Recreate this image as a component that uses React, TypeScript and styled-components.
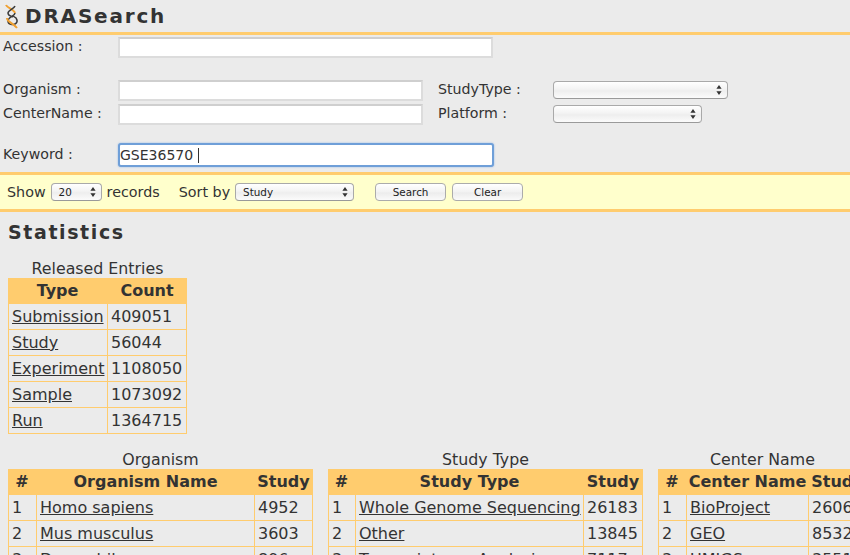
import styled, { createGlobalStyle } from 'styled-components';

const orange = '#ffcc6e';
const font = '"DejaVu Sans", Verdana, sans-serif';

const GlobalStyle = createGlobalStyle`
  html, body {
    margin: 0;
    padding: 0;
    height: 555px;
    overflow: hidden;
    background: #ebebeb;
  }
  body {
    font-family: ${font};
    color: #333;
  }
`;

const Page = styled.div`
  width: 850px;
  height: 555px;
  overflow: hidden;
`;

const Header = styled.header`
  height: 32px;
  display: flex;
  align-items: center;
  padding-left: 5px;
  border-bottom: 3px solid ${orange};
`;

const Brand = styled.h1`
  margin: 0 0 0 4px;
  font-size: 20px;
  font-weight: 700;
  letter-spacing: 1.8px;
  color: #333;
`;

const SearchForm = styled.form`
  height: 137px;
  padding-left: 3px;
  display: flex;
  flex-direction: column;
`;

const FormRow = styled.div<{ $top: number }>`
  display: flex;
  align-items: center;
  height: 24px;
  margin-top: ${(p) => p.$top}px;
`;

const Label = styled.label<{ $width: number }>`
  width: ${(p) => p.$width}px;
  flex: none;
  padding-bottom: 2px;
  font-size: 14.2px;
  white-space: pre;
`;

const TextBox = styled.input<{ $width: number }>`
  box-sizing: border-box;
  width: ${(p) => p.$width}px;
  height: 21px;
  margin: 0 15px 0 0;
  padding: 0 1px;
  background: #fff;
  border: 2px solid #dcdcdc;
  border-top-color: #cfcfcf;
  border-radius: 0;
  font: 14px ${font};
  color: #333;
  outline: none;
`;

const KeywordBox = styled.div`
  box-sizing: border-box;
  width: 376px;
  height: 24px;
  display: flex;
  align-items: center;
  background: #fff;
  border: 2px solid #6f9fd8;
  border-radius: 3px;
  box-shadow: 0 0 2px #8fb6e6;
  font-size: 14px;
`;

const Caret = styled.span`
  width: 1px;
  height: 15px;
  margin-left: 5px;
  background: #333;
`;

const SelectBox = styled.div<{ $width: number; $height: number }>`
  box-sizing: border-box;
  width: ${(p) => p.$width}px;
  height: ${(p) => p.$height}px;
  display: flex;
  align-items: center;
  padding: 0 5px 0 7px;
  background: linear-gradient(#ffffff, #f3f3f3 45%, #eeeeee 55%, #fbfbfb);
  border: 1px solid #a9a9a9;
  border-bottom-color: #9a9a9a;
  border-radius: 4px;
  font-size: 10.4px;
  color: #222;
`;

const SelectText = styled.span`
  flex: 1;
`;

const SelectArrows = styled.svg`
  width: 6px;
  height: 10px;
  flex: none;
  fill: #333;
`;

const Toolbar = styled.div`
  box-sizing: border-box;
  height: 40px;
  display: flex;
  align-items: center;
  padding-left: 7px;
  background: #ffffcc;
  border-top: 3px solid ${orange};
  border-bottom: 3px solid ${orange};
  font-size: 14.3px;
`;

const ToolText = styled.span<{ $left: number }>`
  margin-left: ${(p) => p.$left}px;
`;

const ToolSelect = styled(SelectBox)`
  margin-left: 5px;
`;

const ToolButton = styled.button<{ $left: number }>`
  box-sizing: border-box;
  width: 71px;
  height: 18px;
  margin-left: ${(p) => p.$left}px;
  padding: 0;
  background: linear-gradient(#ffffff, #f2f2f2 50%, #ececec 55%, #fafafa);
  border: 1px solid #ababab;
  border-radius: 4px;
  font: 10.4px ${font};
  color: #222;
`;

const Heading = styled.h2`
  margin: 9px 0 0 8px;
  font-size: 19px;
  line-height: 23px;
  font-weight: 700;
  letter-spacing: 1.6px;
  color: #333;
`;

const DataTable = styled.table<{ $width: number }>`
  width: ${(p) => p.$width}px;
  flex: none;
  table-layout: fixed;
  border-collapse: separate;
  border-spacing: 0;
  font-size: 16px;
  color: #333;

  caption {
    padding-top: 5px;
    line-height: 18px;
    font-size: 15.8px;
    text-align: center;
  }

  th {
    box-sizing: border-box;
    height: 25px;
    padding: 0 1px 0 0;
    background: ${orange};
    font-weight: 700;
    text-align: center;
    white-space: nowrap;
  }

  td {
    box-sizing: border-box;
    height: 26px;
    padding: 0 3px;
    border-right: 1px solid ${orange};
    border-bottom: 1px solid ${orange};
    white-space: nowrap;
  }

  td:first-child {
    border-left: 1px solid ${orange};
  }

  tbody tr:first-child td {
    height: 27px;
    border-top: 1px solid ${orange};
  }

  a {
    color: #333;
    text-decoration: underline;
  }
`;

const HeadCell = styled.th<{ $width: number }>`
  width: ${(p) => p.$width}px;
`;

const EntriesWrap = styled.div`
  margin: 11px 0 0 8px;
`;

const TablesRow = styled.div`
  display: flex;
  margin: 12px 0 0 8px;
  gap: 15px;
`;

const Logo = () => (
  <svg width="16" height="25" viewBox="0 0 16 25" fill="none">
    <path d="M1 1c1 3 8 4 9 8" stroke="#f0a030" strokeWidth="2" />
    <path d="M10 2C9 5 3 6 3 9s3 3 5 4" stroke="#3a3a3a" strokeWidth="1.5" />
    <path d="M10 9c0 3-7 4-7 8s5 4 7 3 3-3 1-6l-3-2" stroke="#3a3a3a" strokeWidth="1.5" />
    <path d="M2 14c0 4 6 5 10 10" stroke="#f0a030" strokeWidth="2" />
  </svg>
);

const Arrows = () => (
  <SelectArrows viewBox="0 0 6 10">
    <path d="M3 0l2.6 3.8H.4zM3 10L.4 6.2h5.2z" />
  </SelectArrows>
);

const entries = [
  ['Submission', '409051'],
  ['Study', '56044'],
  ['Experiment', '1108050'],
  ['Sample', '1073092'],
  ['Run', '1364715'],
];

const rankTables = [
  {
    caption: 'Organism',
    name: 'Organism Name',
    cols: [29, 218, 58],
    rows: [
      ['Homo sapiens', '4952'],
      ['Mus musculus', '3603'],
      ['Drosophila', '896'],
    ],
  },
  {
    caption: 'Study Type',
    name: 'Study Type',
    cols: [28, 228, 59],
    rows: [
      ['Whole Genome Sequencing', '26183'],
      ['Other', '13845'],
      ['Transcriptome Analysis', '7117'],
    ],
  },
  {
    caption: 'Center Name',
    name: 'Center Name',
    cols: [29, 122, 58],
    rows: [
      ['BioProject', '26066'],
      ['GEO', '8532'],
      ['UMIGS', '3551'],
    ],
  },
];

export default function App() {
  return (
    <Page>
      <GlobalStyle />
      <Header>
        <Logo />
        <Brand>DRASearch</Brand>
      </Header>
      <SearchForm>
        <FormRow $top={0}>
          <Label $width={115}>Accession :</Label>
          <TextBox $width={375} />
        </FormRow>
        <FormRow $top={19}>
          <Label $width={115}>Organism :</Label>
          <TextBox $width={305} />
          <Label $width={115}>StudyType :</Label>
          <SelectBox $width={175} $height={18}><SelectText /><Arrows /></SelectBox>
        </FormRow>
        <FormRow $top={0}>
          <Label $width={115}>CenterName :</Label>
          <TextBox $width={305} />
          <Label $width={115}>Platform :</Label>
          <SelectBox $width={149} $height={18}><SelectText /><Arrows /></SelectBox>
        </FormRow>
        <FormRow $top={17}>
          <Label $width={115}>Keyword :</Label>
          <KeywordBox>GSE36570<Caret /></KeywordBox>
        </FormRow>
      </SearchForm>
      <Toolbar>
        Show
        <ToolSelect $width={51} $height={18}><SelectText>20</SelectText><Arrows /></ToolSelect>
        <ToolText $left={5}>records</ToolText>
        <ToolText $left={19}>Sort by</ToolText>
        <ToolSelect $width={119} $height={18}><SelectText>Study</SelectText><Arrows /></ToolSelect>
        <ToolButton $left={21}>Search</ToolButton>
        <ToolButton $left={6}>Clear</ToolButton>
      </Toolbar>
      <Heading>Statistics</Heading>
      <EntriesWrap>
        <DataTable $width={179}>
          <caption>Released Entries</caption>
          <thead>
            <tr><HeadCell $width={100}>Type</HeadCell><HeadCell $width={79}>Count</HeadCell></tr>
          </thead>
          <tbody>
            {entries.map(([type, count]) => (
              <tr key={type}>
                <td><a href="#">{type}</a></td>
                <td>{count}</td>
              </tr>
            ))}
          </tbody>
        </DataTable>
      </EntriesWrap>
      <TablesRow>
        {rankTables.map((table) => (
          <DataTable key={table.caption} $width={table.cols[0] + table.cols[1] + table.cols[2]}>
            <caption>{table.caption}</caption>
            <thead>
              <tr>
                <HeadCell $width={table.cols[0]}>#</HeadCell>
                <HeadCell $width={table.cols[1]}>{table.name}</HeadCell>
                <HeadCell $width={table.cols[2]}>Study</HeadCell>
              </tr>
            </thead>
            <tbody>
              {table.rows.map(([name, study], i) => (
                <tr key={name}>
                  <td>{i + 1}</td>
                  <td><a href="#">{name}</a></td>
                  <td>{study}</td>
                </tr>
              ))}
            </tbody>
          </DataTable>
        ))}
      </TablesRow>
    </Page>
  );
}
